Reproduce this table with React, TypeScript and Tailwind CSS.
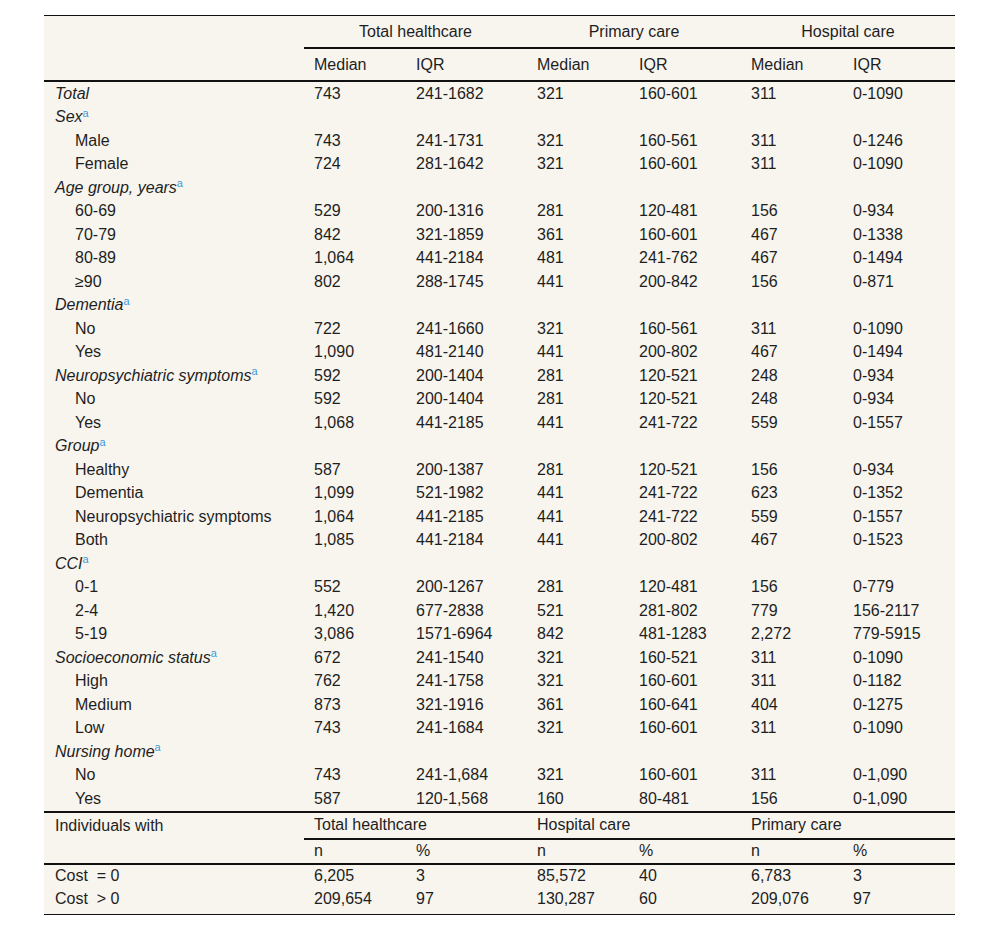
import React from "react";

type Row = { label: string; head?: boolean; sup?: boolean; vals?: string[] };

const rows: Row[] = [
  { label: "Total", head: true, vals: ["743", "241-1682", "321", "160-601", "311", "0-1090"] },
  { label: "Sex", head: true, sup: true },
  { label: "Male", vals: ["743", "241-1731", "321", "160-561", "311", "0-1246"] },
  { label: "Female", vals: ["724", "281-1642", "321", "160-601", "311", "0-1090"] },
  { label: "Age group, years", head: true, sup: true },
  { label: "60-69", vals: ["529", "200-1316", "281", "120-481", "156", "0-934"] },
  { label: "70-79", vals: ["842", "321-1859", "361", "160-601", "467", "0-1338"] },
  { label: "80-89", vals: ["1,064", "441-2184", "481", "241-762", "467", "0-1494"] },
  { label: "≥90", vals: ["802", "288-1745", "441", "200-842", "156", "0-871"] },
  { label: "Dementia", head: true, sup: true },
  { label: "No", vals: ["722", "241-1660", "321", "160-561", "311", "0-1090"] },
  { label: "Yes", vals: ["1,090", "481-2140", "441", "200-802", "467", "0-1494"] },
  { label: "Neuropsychiatric symptoms", head: true, sup: true, vals: ["592", "200-1404", "281", "120-521", "248", "0-934"] },
  { label: "No", vals: ["592", "200-1404", "281", "120-521", "248", "0-934"] },
  { label: "Yes", vals: ["1,068", "441-2185", "441", "241-722", "559", "0-1557"] },
  { label: "Group", head: true, sup: true },
  { label: "Healthy", vals: ["587", "200-1387", "281", "120-521", "156", "0-934"] },
  { label: "Dementia", vals: ["1,099", "521-1982", "441", "241-722", "623", "0-1352"] },
  { label: "Neuropsychiatric symptoms", vals: ["1,064", "441-2185", "441", "241-722", "559", "0-1557"] },
  { label: "Both", vals: ["1,085", "441-2184", "441", "200-802", "467", "0-1523"] },
  { label: "CCI", head: true, sup: true },
  { label: "0-1", vals: ["552", "200-1267", "281", "120-481", "156", "0-779"] },
  { label: "2-4", vals: ["1,420", "677-2838", "521", "281-802", "779", "156-2117"] },
  { label: "5-19", vals: ["3,086", "1571-6964", "842", "481-1283", "2,272", "779-5915"] },
  { label: "Socioeconomic status", head: true, sup: true, vals: ["672", "241-1540", "321", "160-521", "311", "0-1090"] },
  { label: "High", vals: ["762", "241-1758", "321", "160-601", "311", "0-1182"] },
  { label: "Medium", vals: ["873", "321-1916", "361", "160-641", "404", "0-1275"] },
  { label: "Low", vals: ["743", "241-1684", "321", "160-601", "311", "0-1090"] },
  { label: "Nursing home", head: true, sup: true },
  { label: "No", vals: ["743", "241-1,684", "321", "160-601", "311", "0-1,090"] },
  { label: "Yes", vals: ["587", "120-1,568", "160", "80-481", "156", "0-1,090"] },
];

const Sup = () => (
  <sup className="not-italic text-[11px] text-[#3a9ad9]">a</sup>
);

export default function App() {
  const cell = "pl-[10px] pr-0 py-0 align-middle text-left";
  return (
    <div className="min-h-[930px] w-[1000px] bg-white pt-[15px]">
      <table
        className="ml-[44px] table-fixed border-separate border-spacing-0 border-t border-[#111] bg-[#f8f5ef] text-[16px] leading-[18px] text-[#1e1e1e]"
        style={{ fontFamily: '"Liberation Sans", Arial, sans-serif', width: 911 }}
      >
        <colgroup>
          <col style={{ width: 260 }} />
          <col style={{ width: 102 }} />
          <col style={{ width: 121 }} />
          <col style={{ width: 102 }} />
          <col style={{ width: 112 }} />
          <col style={{ width: 102 }} />
          <col style={{ width: 112 }} />
        </colgroup>
        <thead>
          <tr className="h-[33px]">
            <th rowSpan={2} className="border-b-2 border-[#111] font-normal" />
            <th colSpan={2} className="border-b-2 border-[#111] text-center font-normal align-middle">
              Total healthcare
            </th>
            <th colSpan={2} className="border-b-2 border-[#111] text-center font-normal align-middle">
              Primary care
            </th>
            <th colSpan={2} className="border-b-2 border-[#111] text-center font-normal align-middle">
              Hospital care
            </th>
          </tr>
          <tr className="h-[33px]">
            {["Median", "IQR", "Median", "IQR", "Median", "IQR"].map((h, i) => (
              <th key={i} className={`${cell} border-b-2 border-[#111] font-normal`}>
                {h}
              </th>
            ))}
          </tr>
        </thead>
        <tbody>
          {rows.map((r, i) => {
            const last = i === rows.length - 1;
            const b = last ? "border-b-2 border-[#111]" : "";
            return (
              <tr key={i} className={last ? "h-[25.5px]" : "h-[23.5px]"}>
                <td className={`${b} py-0 pr-0 align-middle ${r.head ? "pl-[11px] italic" : "pl-[31px]"}`}>
                  {r.label}
                  {r.sup && <Sup />}
                </td>
                {Array.from({ length: 6 }).map((_, j) => (
                  <td key={j} className={`${cell} ${b}`}>
                    {r.vals ? r.vals[j] : ""}
                  </td>
                ))}
              </tr>
            );
          })}
          <tr className="h-[27px]">
            <td className="pl-[11px] py-0 align-middle">Individuals with</td>
            <td colSpan={2} className={`${cell} border-b-2 border-[#111]`}>Total healthcare</td>
            <td colSpan={2} className={`${cell} border-b-2 border-[#111]`}>Hospital care</td>
            <td colSpan={2} className={`${cell} border-b-2 border-[#111]`}>Primary care</td>
          </tr>
          <tr className="h-[25px]">
            <td className="border-b-2 border-[#111]" />
            {["n", "%", "n", "%", "n", "%"].map((h, i) => (
              <td key={i} className={`${cell} border-b-2 border-[#111]`}>{h}</td>
            ))}
          </tr>
          <tr className="h-[23px]">
            <td className="pl-[11px] py-0 align-middle whitespace-pre">{"Cost  = 0"}</td>
            {["6,205", "3", "85,572", "40", "6,783", "3"].map((v, i) => (
              <td key={i} className={cell}>{v}</td>
            ))}
          </tr>
          <tr className="h-[27px]">
            <td className="pl-[11px] pt-[2px] pb-0 align-top whitespace-pre border-b border-[#111]">{"Cost  > 0"}</td>
            {["209,654", "97", "130,287", "60", "209,076", "97"].map((v, i) => (
              <td key={i} className={`pl-[10px] pt-[2px] pb-0 align-top text-left border-b border-[#111]`}>{v}</td>
            ))}
          </tr>
        </tbody>
      </table>
    </div>
  );
}
